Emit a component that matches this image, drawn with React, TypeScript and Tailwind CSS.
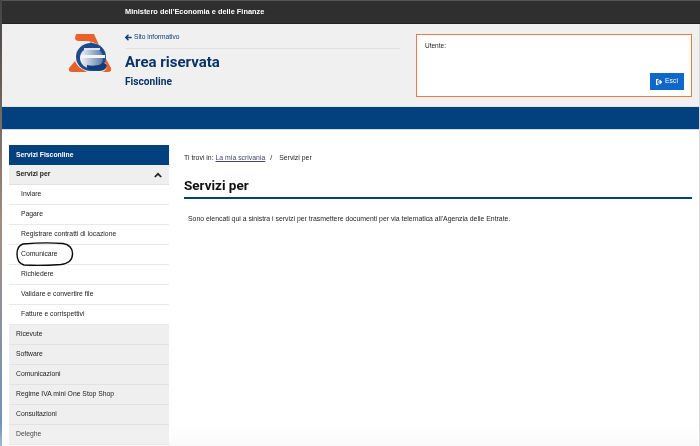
const sans = "font-['Liberation_Sans',Arial,sans-serif]";
const display = "font-['Roboto','Noto_Sans',sans-serif]";

function Logo() {
  return (
    <svg width="44" height="40" viewBox="0 0 44 40" className="shrink-0">
      <defs>
        <linearGradient id="g" x1="0" x2="1" y1="0" y2="0">
          <stop offset="0" stopColor="#f4f6fa" />
          <stop offset="1" stopColor="#5a7cab" />
        </linearGradient>
      </defs>
      <path d="M8 1 H26 L31 12 Q24 8 17 8 H11 Q7 8 7 5 Z" fill="#e8622a" />
      <path d="M7 28 L1 35 Q0 39 4 39 H19 L14 36 Q9 33 7 28 Z" fill="#e8622a" />
      <path d="M33 26 H38 L43 35 Q44 39 40 39 H34 Q39 37 39 33 Q38 29 33 28 Z" fill="#e8622a" />
      <ellipse cx="23" cy="24" rx="15" ry="14" fill="#1c4c8c" />
      <ellipse cx="23.5" cy="25" rx="11.5" ry="10.5" fill="url(#g)" />
      <path d="M23 9 L29 16 H17 Z" fill="#1c4c8c" />
      <rect x="13" y="22" width="24" height="3" fill="#f5f5f5" />
      <rect x="16" y="15" width="16" height="2" fill="#dfe6f0" />
      <path d="M19 32 Q28 34 36 30 Q39 31 39 33 Q38 38 30 38 Q22 38 19 35 Z" fill="#123d7a" />
    </svg>
  );
}

function Row({ children, sub, active }: { children: React.ReactNode; sub?: boolean; active?: boolean }) {
  return (
    <div
      className={
        "h-[20px] flex items-center border-b text-[6.8px] text-[#222] " +
        (sub ? "pl-[12px] bg-white border-[#e8e8e8]" : "pl-[7px] bg-[#efefef] border-[#e2e2e2]") +
        (active ? " font-bold justify-between pr-[7px]" : "")
      }
    >
      {children}
    </div>
  );
}

export default function App() {
  return (
    <div className="w-[700px] h-[446px] overflow-hidden relative bg-white">
      <div className={"w-[700px] h-[446px] bg-white flex flex-col blur-[0.3px] " + sans}>
        <div className="h-[24px] shrink-0 bg-[#2f2f2f] border-t border-t-[#555] border-b border-b-[#222] flex items-center pl-[125px] text-white text-[7.4px] font-bold">
          Ministero dell'Economia e delle Finanze
        </div>
        <div className="h-[83px] shrink-0 bg-[#f0f0f0] flex border-b border-b-[#e4e4e4]">
          <div className="pl-[68px] pt-[9px]">
            <Logo />
          </div>
          <div className="ml-[13px] w-[275px] pt-[10px]">
            <div className="h-[15px] border-b border-[#e2e2e2] flex items-center text-[6.6px] text-[#0a3d7a] leading-none pb-[7px]">
              <svg width="7" height="7" viewBox="0 0 10 10" className="mr-[2px]">
                <path d="M5 1 L1 5 L5 9 M1 5 H9.5" fill="none" stroke="#0a3d7a" strokeWidth="2" />
              </svg>
              Sito informativo
            </div>
            <div className={"mt-[3px] text-[#0a3468] text-[15px] leading-[20px] font-bold " + display}>Area riservata</div>
            <div className={"mt-[3px] text-[#0a3468] text-[10.2px] leading-[14px] font-bold " + display}>Fisconline</div>
          </div>
          <div className="ml-auto mr-[8px] mt-[10px] w-[276px] h-[63px] bg-white border border-[#ef7a45] px-[8px] relative">
            <div className="text-[6.5px] text-[#222] mt-[8px] leading-none">Utente:</div>
            <div className="absolute right-[7px] bottom-[6px] w-[34px] h-[17px] bg-[#0f68c7] text-white text-[6.8px] flex items-center justify-center gap-[3px]">
              <svg width="6" height="6" viewBox="0 0 10 10">
                <path d="M4 1 H1 V9 H4 M3 5 H9 M6 2 L9 5 L6 8" fill="none" stroke="#fff" strokeWidth="2" />
              </svg>
              Esci
            </div>
          </div>
        </div>
        <div className="h-[23px] shrink-0 bg-[#03407e] border-b border-b-[#cfdbe8]" />
        <div className="flex pl-[9px] pt-[15px] relative">
          <div className="w-[160px] shrink-0">
            <div className="h-[20px] bg-[#03407e] text-white text-[6.8px] font-bold flex items-center pl-[7px]">Servizi Fisconline</div>
            <Row active>
              <span>Servizi per</span>
              <svg width="8" height="6" viewBox="0 0 10 7">
                <path d="M1 6 L5 2 L9 6" fill="none" stroke="#222" strokeWidth="2.2" />
              </svg>
            </Row>
            <Row sub>Inviare</Row>
            <Row sub>Pagare</Row>
            <Row sub>Registrare contratti di locazione</Row>
            <Row sub>Comunicare</Row>
            <Row sub>Richiedere</Row>
            <Row sub>Validare e convertire file</Row>
            <Row sub>Fatture e corrispettivi</Row>
            <Row>Ricevute</Row>
            <Row>Software</Row>
            <Row>Comunicazioni</Row>
            <Row>Regime IVA mini One Stop Shop</Row>
            <Row>Consultazioni</Row>
            <Row>Deleghe</Row>
          </div>
          <div className="ml-[15px] flex-1 pr-[8px] text-[#222]">
            <div className="pt-[8px] text-[6.9px] leading-[10px] text-[#222]">
              Ti trovi in: <span className="underline text-[#444a6a]">La mia scrivania</span>
              <span className="mx-[5px]">/</span> Servizi per
            </div>
            <div className={"mt-[12px] text-[13.5px] leading-[20px] font-bold text-[#111] border-b-[2px] border-[#03407e] pb-[2px] " + display}>Servizi per</div>
            <div className="mt-[15px] pl-[4px] text-[6.88px] leading-[10px]">
              Sono elencati qui a sinistra i servizi per trasmettere documenti per via telematica all'Agenzia delle Entrate.
            </div>
          </div>
          <svg className="absolute left-[15px] top-[112px]" width="60" height="25" viewBox="0 0 60 25">
            <path d="M8 2 Q30 0 48 1.5 Q57 3 57.5 11 Q58 21 46 22.5 Q25 24 9 23 Q2 21 2 12 Q2 4 8 2 Z" fill="none" stroke="#0b0b0b" strokeWidth="1.4" />
          </svg>
        </div>
      </div>
      <div className="absolute left-0 top-0 bottom-0 w-[1.5px] bg-gradient-to-b from-[#444] via-[#a58b80] to-[#6a93c4]" />
      <div className="absolute right-0 top-[24px] bottom-0 w-[1px] bg-[#d8d8d8]" />
      <div className="absolute left-0 right-0 bottom-0 h-[22px] bg-gradient-to-b from-transparent to-[#f2f2f2]/40" />
    </div>
  );
}
